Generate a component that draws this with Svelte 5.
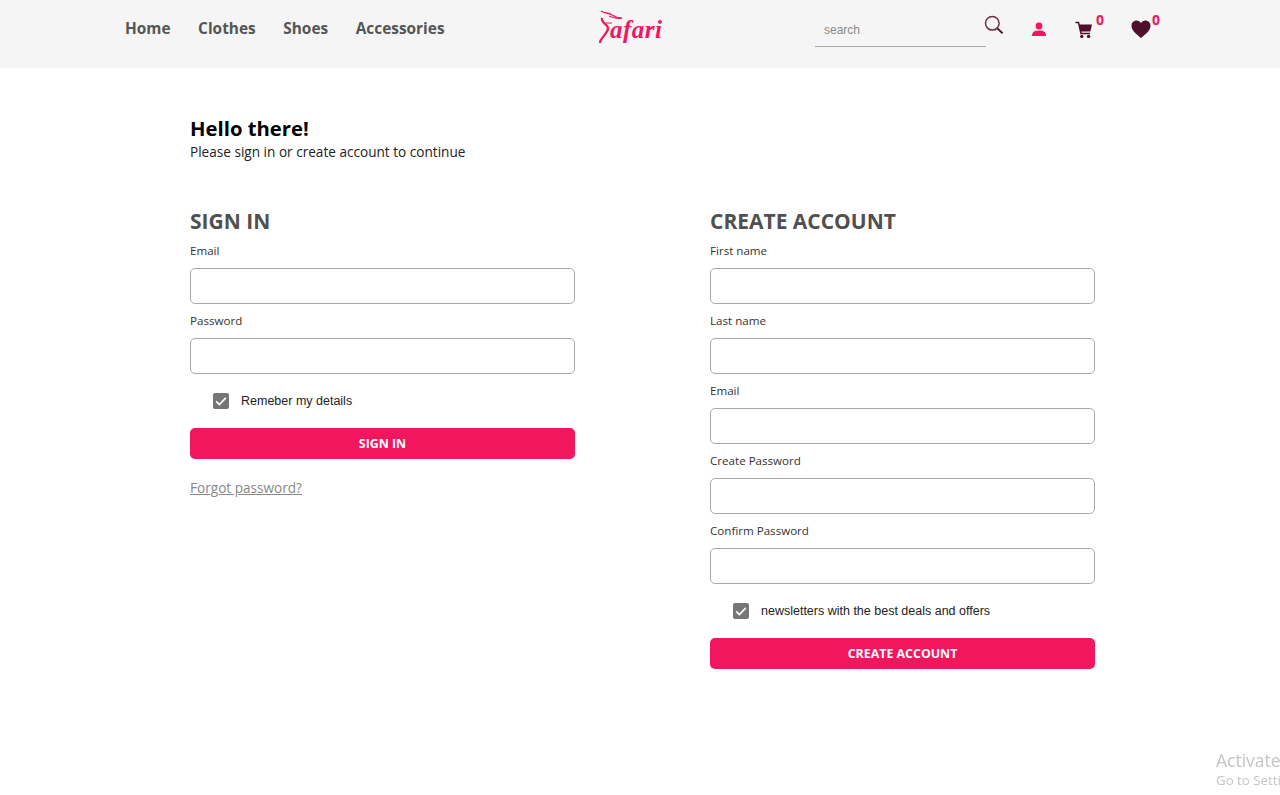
<script>
  const signIn = ['Email', 'Password'];
  const create = ['First name', 'Last name', 'Email', 'Create Password', 'Confirm Password'];
  const nav = ['Home', 'Clothes', 'Shoes', 'Accessories'];
</script>

<header>
  <nav>
    {#each nav as item}
      <a href="#top">{item}</a>
    {/each}
  </nav>

  <svg class="logo" width="66" height="40" viewBox="0 0 66 40">
    <path d="M3 2 C7 5 10 3 14 6 C17 8 20 9 24 9 C19 10 15 9 11 7" fill="none" stroke="#f2165f" stroke-width="1.3" />
    <path d="M4 9 C3 12 6 14 9 17 C12 20 8 24 5 28 C3 30 2 32 2 34" fill="none" stroke="#f2165f" stroke-width="2.2" />
    <path d="M5 14 L14 14" fill="none" stroke="#f2165f" stroke-width="1" />
    <text x="12" y="29" class="logo-text">afari</text>
  </svg>

  <div class="tools">
    <input class="search" placeholder="search" />
    <svg class="ico-search" width="20" height="20" viewBox="0 0 20 20">
      <circle cx="8.3" cy="8.3" r="6.8" fill="none" stroke="#6b2c4a" stroke-width="1.5" />
      <path d="M13.4 13.4 L18.6 18.4" stroke="#4a1029" stroke-width="2" />
    </svg>
    <svg class="ico-user" width="16" height="14" viewBox="0 0 16 14">
      <circle cx="8" cy="4" r="3.4" fill="#f2165f" />
      <path d="M1 14 C1 9.5 4 8.4 8 8.4 C12 8.4 15 9.5 15 14 Z" fill="#f2165f" />
    </svg>
    <div class="badged cart">
      <svg width="18" height="18" viewBox="0 0 18 18">
        <path d="M0.5 1.5 H3.5 L6 12.5 H15" fill="none" stroke="#4f0f2c" stroke-width="1.5" />
        <path d="M4 3.5 H17 L15.4 10.5 H5.5 Z" fill="#4f0f2c" />
        <circle cx="6.8" cy="15.4" r="1.7" fill="#4f0f2c" />
        <circle cx="13.6" cy="15.4" r="1.7" fill="#4f0f2c" />
      </svg>
      <span class="count">0</span>
    </div>
    <div class="badged heart">
      <svg width="20" height="18" viewBox="0 0 20 18">
        <path d="M10 18 C6 14.5 0.5 11 0.5 5.8 C0.5 2.6 3 0.5 5.6 0.5 C7.4 0.5 9 1.4 10 3 C11 1.4 12.6 0.5 14.4 0.5 C17 0.5 19.5 2.6 19.5 5.8 C19.5 11 14 14.5 10 18 Z" fill="#4f0f2c" />
      </svg>
      <span class="count">0</span>
    </div>
  </div>
</header>

<main>
  <div class="hello">
    <h1>Hello there!</h1>
    <p>Please sign in or create account to continue</p>
  </div>

  <div class="cols">
    <form>
      <h2>SIGN IN</h2>
      {#each signIn as label}
        <label>
          <span>{label}</span>
          <input type={label === 'Password' ? 'password' : 'text'} />
        </label>
      {/each}
      <div class="check">
        <span class="box">
          <svg width="16" height="16" viewBox="0 0 16 16"><path d="M3.2 8.4 L6.4 11.6 L12.8 4.8" fill="none" stroke="#fff" stroke-width="1.7" /></svg>
        </span>
        Remeber my details
      </div>
      <button type="button">SIGN IN</button>
      <a class="forgot" href="#top">Forgot password?</a>
    </form>

    <form>
      <h2>CREATE ACCOUNT</h2>
      {#each create as label}
        <label>
          <span>{label}</span>
          <input type={label.includes('Password') ? 'password' : 'text'} />
        </label>
      {/each}
      <div class="check">
        <span class="box">
          <svg width="16" height="16" viewBox="0 0 16 16"><path d="M3.2 8.4 L6.4 11.6 L12.8 4.8" fill="none" stroke="#fff" stroke-width="1.7" /></svg>
        </span>
        newsletters with the best deals and offers
      </div>
      <button type="button">CREATE ACCOUNT</button>
    </form>
  </div>
</main>

<div class="activate">
  <div class="a1">Activate Windows</div>
  <div class="a2">Go to Settings to activate Windows.</div>
</div>

<style>
  :global(body) {
    overflow: hidden;
    background: #fff;
    font-family: "Open Sans", "Noto Sans", sans-serif;
  }
  header {
    height: 68px;
    background: #f5f5f5;
    position: relative;
    display: flex;
    align-items: flex-start;
  }
  nav {
    display: flex;
    flex: none;
    gap: 27.6px;
    padding: 18px 0 0 125px;
    width: 598px;
    box-sizing: border-box;
  }
  nav a {
    color: #555;
    font-size: 15.4px;
    font-weight: 700;
    line-height: 22px;
    text-decoration: none;
  }
  .logo {
    flex: none;
    margin: 9px 0 0 0;
  }
  .logo-text {
    font-family: "Liberation Serif", serif;
    font-style: italic;
    font-weight: 700;
    font-size: 25px;
    fill: #f2165f;
    letter-spacing: 0.5px;
  }
  .tools {
    display: flex;
    align-items: flex-start;
    margin-left: 151px;
  }
  .search {
    width: 171px;
    height: 33px;
    margin-top: 14px;
    padding: 0 9px;
    box-sizing: border-box;
    border: 0;
    border-bottom: 1px solid #aaa;
    background: transparent;
    font-family: "Liberation Sans", sans-serif;
    font-size: 12px;
    outline: none;
  }
  .search::placeholder {
    color: #8a8a8a;
  }
  .ico-search {
    margin: 15px 0 0 -2px;
  }
  .ico-user {
    margin: 22px 0 0 27px;
  }
  .badged {
    position: relative;
    display: flex;
  }
  .cart {
    margin: 21px 0 0 28px;
  }
  .heart {
    margin: 20px 0 0 38px;
  }
  .count {
    position: absolute;
    top: -10px;
    left: 21px;
    color: #f2165f;
    font-size: 14px;
    font-weight: 700;
    line-height: 18px;
  }
  .heart .count {
    top: -9px;
  }
  main {
    padding: 47px 0 0 190px;
  }
  .hello h1 {
    margin: 0;
    font-size: 20.3px;
    font-weight: 700;
    line-height: 26px;
    color: #000;
  }
  .hello p {
    margin: 1px 0 0;
    font-size: 13.6px;
    line-height: 20px;
    color: #222;
  }
  .cols {
    display: grid;
    grid-template-columns: 385px 385px;
    gap: 135px;
    margin-top: 44px;
  }
  form {
    display: flex;
    flex-direction: column;
  }
  h2 {
    margin: 0 0 7px;
    font-size: 21px;
    font-weight: 700;
    line-height: 30px;
    color: #505050;
  }
  label {
    display: block;
    height: 70px;
  }
  label span {
    display: block;
    height: 25px;
    font-size: 11.6px;
    line-height: 16px;
    color: #333;
  }
  label input {
    display: block;
    width: 100%;
    height: 36px;
    box-sizing: border-box;
    border: 1px solid #a9a9a9;
    border-radius: 5px;
    background: #fff;
    outline: none;
  }
  .check {
    display: flex;
    align-items: center;
    gap: 12px;
    height: 16px;
    padding-left: 23px;
    margin: 10px 0 19px;
    font-family: "Liberation Sans", sans-serif;
    font-size: 12.5px;
    color: #222;
  }
  .box {
    width: 16px;
    height: 16px;
    background: #767676;
    border-radius: 2px;
    display: flex;
  }
  button {
    height: 31px;
    border: 0;
    border-radius: 5px;
    background: #f2165f;
    color: #fff;
    font-family: inherit;
    font-size: 12.4px;
    font-weight: 700;
    padding: 0;
  }
  .forgot {
    margin-top: 19px;
    font-size: 13.6px;
    line-height: 20px;
    color: #888;
  }
  .activate {
    position: fixed;
    left: 1216px;
    top: 749px;
    white-space: nowrap;
    color: #c4c4c4;
  }
  .a1 {
    font-size: 17.5px;
    line-height: 22px;
  }
  .a2 {
    font-size: 13.3px;
    line-height: 18px;
  }
</style>
